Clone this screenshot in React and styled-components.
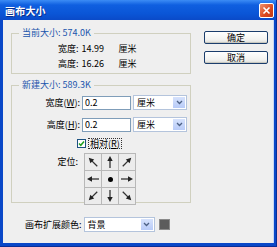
import React from 'react'
import styled, { createGlobalStyle } from 'styled-components'

const GlobalStyle = createGlobalStyle`
  html, body {
    margin: 0;
    padding: 0;
    background: #ffffff;
  }
  * {
    box-sizing: border-box;
  }
`

const Window = styled.div`
  width: 277px;
  height: 247px;
  display: flex;
  flex-direction: column;
  background: #0a48c8;
  border-right: 1px solid #0a2e96;
  border-bottom: 1px solid #0a2e96;
  font-family: 'Noto Sans CJK SC', 'DejaVu Sans', sans-serif;
  font-size: 9px;
  color: #000;
  overflow: hidden;
`

const TitleBar = styled.div`
  height: 20px;
  flex: none;
  display: flex;
  align-items: center;
  justify-content: space-between;
  padding: 0 2px 0 5px;
  background: linear-gradient(#3c8cf5 0%, #0f5fe0 25%, #0a55d6 70%, #0a4ac8 100%);
  color: #fff;
  font-weight: bold;
  font-size: 10px;
  letter-spacing: 0.2px;
  text-shadow: 1px 1px 0 #0a2e8a;
`

const CloseButton = styled.div`
  width: 15px;
  height: 15px;
  margin-top: 1px;
  border: 1px solid #fff;
  border-radius: 2px;
  background: linear-gradient(135deg, #f0906c, #d9481f 60%, #c23a17);
  display: flex;
  align-items: center;
  justify-content: center;
`

const Body = styled.div`
  flex: 1;
  margin: 0 2px 3px 3px;
  background: #efefef;
  display: flex;
  padding: 7px 0 0 8px;
  border-right: 1px solid #c9d6f5;
`

const LeftCol = styled.div`
  width: 180px;
  display: flex;
  flex-direction: column;
`

const RightCol = styled.div`
  margin-left: 13px;
  padding-top: 4px;
  display: flex;
  flex-direction: column;
  gap: 7px;
`

const Group = styled.fieldset`
  margin: 0 0 ${p => p.$gap || 0}px 0;
  padding: 0;
  height: ${p => p.$h}px;
  border: 1px solid #d0d0bf;
  border-radius: 0;
`

const Legend = styled.legend`
  margin-left: 7px;
  padding: 0 3px;
  line-height: 12px;
  color: #2155ac;
`

const InfoRow = styled.div`
  display: flex;
  align-items: center;
  height: 15px;
  padding-left: 46px;
  margin-top: ${p => p.$top || 0}px;
`

const Value = styled.span`
  width: 40px;
  padding-left: 3px;
`

const FieldRow = styled.div`
  display: flex;
  align-items: center;
  height: 15px;
  margin-top: ${p => p.$top || 0}px;
`

const FieldLabel = styled.span`
  width: 68px;
  text-align: right;
  margin-right: 2px;
`

const TextBox = styled.div`
  width: 49px;
  height: 14px;
  background: #fff;
  border: 1px solid #7f9db9;
  padding-left: 2px;
  line-height: 12px;
`

const Select = styled.div`
  width: ${p => p.$w}px;
  height: ${p => p.$h || 15}px;
  margin-left: 2px;
  background: #fff;
  border: 1px solid #b4c4dc;
  display: flex;
  align-items: stretch;
  justify-content: space-between;
  line-height: 12px;
`

const SelectText = styled.span`
  padding-left: 3px;
  align-self: center;
`

const SelectButton = styled.span`
  width: 12px;
  margin: 1px;
  background: linear-gradient(#d6e2fc, #b8cbf8);
  display: flex;
  align-items: center;
  justify-content: center;
`

const CheckRow = styled.div`
  display: flex;
  align-items: center;
  height: 11px;
  margin-top: 6px;
  padding-left: 65px;
`

const CheckBox = styled.span`
  width: 9px;
  height: 9px;
  background: #fff;
  border: 1px solid #1c5180;
  display: flex;
  align-items: center;
  justify-content: center;
`

const CheckLabel = styled.span`
  margin-left: 2px;
  padding: 0 1px;
  border: 1px dotted #333;
  line-height: 9px;
`

const AnchorRow = styled.div`
  display: flex;
  align-items: flex-start;
  margin-top: 4px;
`

const AnchorLabel = styled.span`
  width: 66px;
  text-align: right;
  margin-right: 6px;
  margin-top: 2px;
`

const AnchorGrid = styled.div`
  display: grid;
  grid-template-columns: repeat(3, 16px);
  grid-template-rows: repeat(3, 16px);
  gap: 1px;
  padding: 1px;
  background: #b8b8b8;
`

const Cell = styled.div`
  background: #ececec;
  display: flex;
  align-items: center;
  justify-content: center;
`

const Dot = styled.span`
  width: 5px;
  height: 5px;
  border-radius: 50%;
  background: #000;
`

const ColorRow = styled.div`
  display: flex;
  align-items: center;
  margin-top: 14px;
  padding-left: 14px;
`

const Swatch = styled.span`
  width: 11px;
  height: 11px;
  margin-left: 4px;
  background: #5c5c5c;
  border: 1px solid #8a8a8a;
`

const Button = styled.div`
  width: 64px;
  height: 13px;
  border: 1px solid #1b3d6c;
  border-radius: 2px;
  background: linear-gradient(#ffffff, #f2f2f0 70%, #dcdcd6);
  box-shadow: inset 0 -1px 0 #c8c8c0;
  display: flex;
  align-items: center;
  justify-content: center;
  line-height: 10px;
`

const Chevron = () => (
  <svg width="7" height="5" viewBox="0 0 7 5">
    <path d="M1 1 L3.5 3.5 L6 1" fill="none" stroke="#4d6185" strokeWidth="1.3" />
  </svg>
)

const Arrow = ({ angle }) => (
  <svg width="14" height="14" viewBox="0 0 14 14">
    <g transform={`rotate(${angle} 7 7)`}>
      <line x1="7" y1="13" x2="7" y2="5" stroke="#333" strokeWidth="1.3" />
      <polygon points="7,1 4.3,6 9.7,6" fill="#222" />
    </g>
  </svg>
)

const anchors = [-45, 0, 45, -90, null, 90, -135, 180, 135]

export default function App() {
  return (
    <>
      <GlobalStyle />
      <Window>
        <TitleBar>
          <span>画布大小</span>
          <CloseButton>
            <svg width="9" height="9" viewBox="0 0 9 9">
              <path d="M1.5 1.5 L7.5 7.5 M7.5 1.5 L1.5 7.5" stroke="#fff" strokeWidth="1.6" />
            </svg>
          </CloseButton>
        </TitleBar>
        <Body>
          <LeftCol>
            <Group $h={47} $gap={5}>
              <Legend>当前大小: 574.0K</Legend>
              <InfoRow $top={2}>
                <span>宽度:</span>
                <Value>14.99</Value>
                <span>厘米</span>
              </InfoRow>
              <InfoRow>
                <span>高度:</span>
                <Value>16.26</Value>
                <span>厘米</span>
              </InfoRow>
            </Group>
            <Group $h={124}>
              <Legend>新建大小: 589.3K</Legend>
              <FieldRow $top={4}>
                <FieldLabel>宽度(<u>W</u>):</FieldLabel>
                <TextBox>0.2</TextBox>
                <Select $w={54}>
                  <SelectText>厘米</SelectText>
                  <SelectButton><Chevron /></SelectButton>
                </Select>
              </FieldRow>
              <FieldRow $top={7}>
                <FieldLabel>高度(<u>H</u>):</FieldLabel>
                <TextBox>0.2</TextBox>
                <Select $w={54}>
                  <SelectText>厘米</SelectText>
                  <SelectButton><Chevron /></SelectButton>
                </Select>
              </FieldRow>
              <CheckRow>
                <CheckBox>
                  <svg width="7" height="7" viewBox="0 0 7 7">
                    <path d="M1 3.5 L2.8 5.3 L6 1.5" fill="none" stroke="#21a121" strokeWidth="1.5" />
                  </svg>
                </CheckBox>
                <CheckLabel>相对(<u>R</u>)</CheckLabel>
              </CheckRow>
              <AnchorRow>
                <AnchorLabel>定位:</AnchorLabel>
                <AnchorGrid>
                  {anchors.map((a, i) => (
                    <Cell key={i}>{a === null ? <Dot /> : <Arrow angle={a} />}</Cell>
                  ))}
                </AnchorGrid>
              </AnchorRow>
            </Group>
            <ColorRow>
              <span>画布扩展颜色:</span>
              <Select $w={71} $h={15}>
                <SelectText>背景</SelectText>
                <SelectButton><Chevron /></SelectButton>
              </Select>
              <Swatch />
            </ColorRow>
          </LeftCol>
          <RightCol>
            <Button>确定</Button>
            <Button>取消</Button>
          </RightCol>
        </Body>
      </Window>
    </>
  )
}
